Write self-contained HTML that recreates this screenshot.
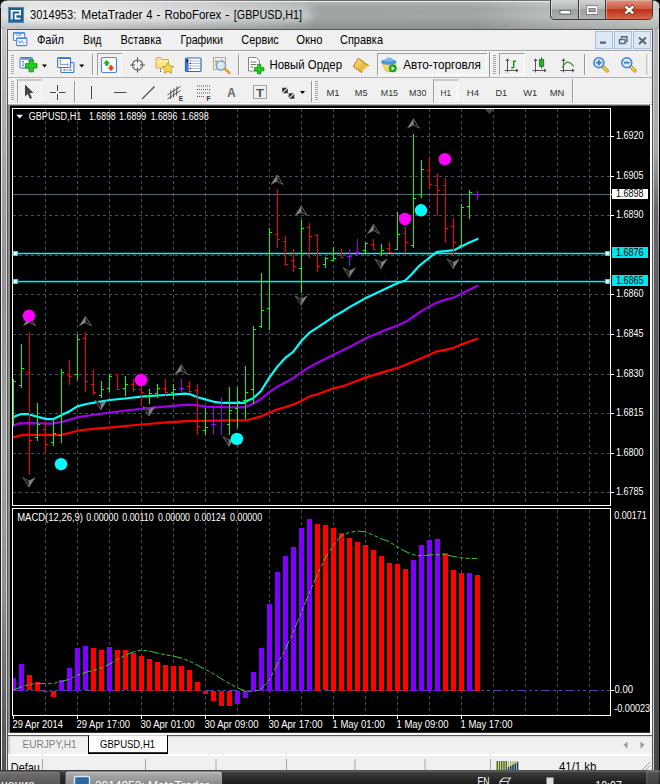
<!DOCTYPE html>
<html lang="ru"><head><meta charset="utf-8"><title>3014953: MetaTrader 4 - RoboForex - [GBPUSD,H1]</title>
<style>
html,body{margin:0;padding:0;background:#000;overflow:hidden}
body{width:660px;height:784px}
svg{display:block;font-family:"Liberation Sans",Arial,sans-serif}
text{white-space:pre}
</style></head><body>
<svg width="660" height="784" viewBox="0 0 660 784">
<defs>
<linearGradient id="tb" x1="0" y1="0" x2="1" y2="0"><stop offset="0" stop-color="#e0e2e2"/><stop offset="0.15" stop-color="#d2d5d5"/><stop offset="0.3" stop-color="#bec2c2"/><stop offset="0.47" stop-color="#a2a8a8"/><stop offset="0.72" stop-color="#a2a9a9"/><stop offset="0.84" stop-color="#bcc0c0"/><stop offset="1" stop-color="#cfd1d1"/></linearGradient>
<linearGradient id="fl" x1="0" y1="0" x2="0" y2="1"><stop offset="0" stop-color="#c8c8c8"/><stop offset="0.095" stop-color="#b0b0b0"/><stop offset="0.23" stop-color="#9e9e9e"/><stop offset="0.36" stop-color="#909090"/><stop offset="0.56" stop-color="#a2a2a2"/><stop offset="0.757" stop-color="#8c8c8c"/><stop offset="0.89" stop-color="#626062"/><stop offset="1" stop-color="#525052"/></linearGradient>
<linearGradient id="fr" x1="0" y1="0" x2="0" y2="1"><stop offset="0" stop-color="#b8bcc0"/><stop offset="0.16" stop-color="#a4a8ac"/><stop offset="0.24" stop-color="#6c646c"/><stop offset="0.4" stop-color="#5c5860"/><stop offset="0.7" stop-color="#545256"/><stop offset="1" stop-color="#48444a"/></linearGradient>
<linearGradient id="bmin" x1="0" y1="0" x2="0" y2="1"><stop offset="0" stop-color="#d0d3d3"/><stop offset="0.45" stop-color="#b4b8b8"/><stop offset="0.5" stop-color="#9a9e9e"/><stop offset="1" stop-color="#b0b4b4"/></linearGradient>
<linearGradient id="bcl" x1="0" y1="0" x2="0" y2="1"><stop offset="0" stop-color="#e0907c"/><stop offset="0.45" stop-color="#cf5a42"/><stop offset="0.5" stop-color="#bf2f18"/><stop offset="1" stop-color="#d6684a"/></linearGradient>
<linearGradient id="tsk" x1="0" y1="0" x2="0" y2="1"><stop offset="0" stop-color="#8c8c8c"/><stop offset="1" stop-color="#6a6a6a"/></linearGradient>
<linearGradient id="tsk2" x1="0" y1="0" x2="0" y2="1"><stop offset="0" stop-color="#d8d8d8"/><stop offset="1" stop-color="#b0b0b0"/></linearGradient>
<filter id="glow" x="-10%" y="-60%" width="120%" height="220%"><feGaussianBlur stdDeviation="4"/></filter>
<pattern id="chk" width="2" height="2" patternUnits="userSpaceOnUse"><rect width="2" height="2" fill="#ffffff"/><rect width="1" height="1" fill="#e6e6e6"/><rect x="1" y="1" width="1" height="1" fill="#e6e6e6"/></pattern>
</defs>
<rect x="0" y="0" width="660" height="784" fill="#000" />
<path d="M0,784 V8 Q0,0 8,0 H652 Q660,0 660,8 V784 Z" fill="url(#tb)" stroke="#2a2a2a" stroke-width="1"/>
<rect x="1" y="28" width="1" height="756" fill="#eeeeee" />
<rect x="2" y="28" width="4" height="756" fill="url(#fl)" />
<rect x="6" y="28" width="1" height="756" fill="#d8d8d8" />
<rect x="653" y="28" width="1" height="756" fill="#d0d4d8" />
<rect x="654" y="28" width="4" height="756" fill="url(#fr)" />
<linearGradient id="fe" x1="0" y1="0" x2="0" y2="1"><stop offset="0" stop-color="#ececec"/><stop offset="0.2" stop-color="#d8d8d8"/><stop offset="0.3" stop-color="#8a868a"/><stop offset="1" stop-color="#4a464a"/></linearGradient>
<rect x="658" y="28" width="1" height="756" fill="url(#fe)" />
<rect x="659" y="8" width="1" height="776" fill="#000" />
<rect x="0" y="8" width="1" height="776" fill="#1a1a1a" />
<linearGradient id="tv" x1="0" y1="0" x2="0" y2="1"><stop offset="0" stop-color="#fff" stop-opacity="0.15"/><stop offset="0.5" stop-color="#000" stop-opacity="0"/><stop offset="1" stop-color="#000" stop-opacity="0.14"/></linearGradient>
<rect x="1" y="2" width="658" height="27" fill="url(#tv)" />
<rect x="8" y="1" width="644" height="1" fill="#eef0f0" />
<linearGradient id="gl" x1="0" y1="0" x2="1" y2="0"><stop offset="0" stop-color="#fff" stop-opacity="0.6"/><stop offset="0.5" stop-color="#fff" stop-opacity="0.5"/><stop offset="1" stop-color="#fff" stop-opacity="0.35"/></linearGradient>
<rect x="22" y="5" width="290" height="18" rx="8" fill="url(#gl)" filter="url(#glow)"/>
<text x="30" y="18.8" font-size="12.3" fill="#000" textLength="46.3" lengthAdjust="spacingAndGlyphs" >3014953:</text>
<text x="81.3" y="18.8" font-size="12.3" fill="#000" textLength="61.2" lengthAdjust="spacingAndGlyphs" >MetaTrader</text>
<text x="146.3" y="18.8" font-size="12.3" fill="#000" textLength="6.2" lengthAdjust="spacingAndGlyphs" >4</text>
<text x="156.3" y="18.8" font-size="12.3" fill="#000" textLength="4.2" lengthAdjust="spacingAndGlyphs" >-</text>
<text x="164.5" y="18.8" font-size="12.3" fill="#000" textLength="56.8" lengthAdjust="spacingAndGlyphs" >RoboForex</text>
<text x="225" y="18.8" font-size="12.3" fill="#000" textLength="4.5" lengthAdjust="spacingAndGlyphs" >-</text>
<text x="233.8" y="18.8" font-size="12.3" fill="#000" textLength="68.2" lengthAdjust="spacingAndGlyphs" >[GBPUSD,H1]</text>
<rect x="8" y="7" width="16" height="15.7" rx="1" fill="#1d5d8c"/><rect x="8.5" y="7.5" width="15" height="14.7" rx="1" fill="none" stroke="#4f8fc0" stroke-width="1"/>
<path d="M10.7,10 H21 V15.3 H16.4 V17.7 H20.5 V19.5 H14.5 V13.6 H19.3 V11.6 H12.7 V19.5 H10.7 Z" fill="#fff"/>
<path d="M550.5,0 V15 Q550.5,19.5 555,19.5 H648 Q652.5,19.5 652.5,15 V0" fill="url(#bmin)" stroke="#3c3c3c" stroke-width="1"/>
<path d="M606,0.5 H652 V15 Q652,19 648,19 H606 Z" fill="url(#bcl)"/>
<line x1="578.5" y1="0" x2="578.5" y2="19" stroke="#3c3c3c" stroke-width="1" />
<line x1="605.5" y1="0" x2="605.5" y2="19" stroke="#3c3c3c" stroke-width="1" />
<line x1="579.5" y1="1" x2="579.5" y2="18.5" stroke="#e0e2e2" stroke-width="1" opacity="0.7"/>
<line x1="551.5" y1="1" x2="551.5" y2="16" stroke="#e0e2e2" stroke-width="1" opacity="0.7"/>
<line x1="606.5" y1="1" x2="606.5" y2="18.5" stroke="#f0b0a0" stroke-width="1" opacity="0.7"/>
<rect x="560" y="10.5" width="10.5" height="3.5" fill="#fff" stroke="#555" stroke-width="0.8"/>
<rect x="586.6" y="5.9" width="11" height="8.3" fill="none" stroke="#555" stroke-width="0.8"/><rect x="587.7" y="7" width="8.8" height="6.1" fill="none" stroke="#fff" stroke-width="1.9"/><rect x="589" y="8.3" width="6.2" height="3.5" fill="none" stroke="#666" stroke-width="0.6"/>
<path d="M626.2,7.2 L632.4,12.6 M632.4,7.2 L626.2,12.6" stroke="#5a3028" stroke-width="3.8" stroke-linecap="square"/><path d="M626.2,7.2 L632.4,12.6 M632.4,7.2 L626.2,12.6" stroke="#fff" stroke-width="2.5" stroke-linecap="square"/>
<rect x="7" y="29" width="646" height="741" fill="#555" />
<rect x="8" y="30" width="644" height="740" fill="#fff" />
<rect x="8" y="30" width="644" height="20" fill="#f0f0f0" />
<rect x="8" y="50" width="644" height="1" fill="#a0a0a0" />
<rect x="8" y="51" width="644" height="26" fill="#f0f0f0" />
<rect x="8" y="51" width="644" height="1" fill="#fafafa" />
<rect x="8" y="77" width="644" height="1" fill="#b4b4b4" />
<rect x="8" y="78" width="644" height="25" fill="#f0f0f0" />
<linearGradient id="sh" x1="0" y1="0" x2="0" y2="1"><stop offset="0" stop-color="#d0d0d0"/><stop offset="1" stop-color="#505050"/></linearGradient>
<rect x="8" y="102.5" width="644" height="2.5" fill="url(#sh)" />
<g>
<text x="37" y="43.7" font-size="12.2" fill="#000" textLength="27" lengthAdjust="spacingAndGlyphs" >Файл</text>
<text x="83.3" y="43.7" font-size="12.2" fill="#000" textLength="18.2" lengthAdjust="spacingAndGlyphs" >Вид</text>
<text x="120.5" y="43.7" font-size="12.2" fill="#000" textLength="40.8" lengthAdjust="spacingAndGlyphs" >Вставка</text>
<text x="180.5" y="43.7" font-size="12.2" fill="#000" textLength="42.5" lengthAdjust="spacingAndGlyphs" >Графики</text>
<text x="241.3" y="43.7" font-size="12.2" fill="#000" textLength="37.5" lengthAdjust="spacingAndGlyphs" >Сервис</text>
<text x="296.3" y="43.7" font-size="12.2" fill="#000" textLength="26.2" lengthAdjust="spacingAndGlyphs" >Окно</text>
<text x="340" y="43.7" font-size="12.2" fill="#000" textLength="43" lengthAdjust="spacingAndGlyphs" >Справка</text>
</g>
<g fill="#fff" stroke="#4a84ee" stroke-width="1.1"><rect x="13.5" y="32.7" width="11.2" height="7.8" rx="0.8"/><path d="M16,35.5 l1.2,-1 l1.3,1.6 l1.5,-2 l1.6,1.8" fill="none" stroke-width="0.8"/><rect x="16.6" y="38" width="10.2" height="7.6" rx="0.8"/></g>
<path d="M13.5,33 h11.2 M16.6,38.3 h10.2" stroke="#4a84ee" stroke-width="1.4"/>
<path d="M18.5,40.5 l1.5,2.8 l1.7,-2.8 l1.6,2.8 l1.3,-1" fill="none" stroke="#4a84ee" stroke-width="0.9"/>
<rect x="595.5" y="31.5" width="17" height="17" fill="#dce8f6" stroke="#a9c1de" stroke-width="1"/>
<rect x="614.5" y="31.5" width="17" height="17" fill="#dce8f6" stroke="#a9c1de" stroke-width="1"/>
<rect x="633.5" y="31.5" width="17" height="17" fill="#dce8f6" stroke="#a9c1de" stroke-width="1"/>
<rect x="600" y="41.5" width="6" height="2.3" fill="#5c6670" />
<g fill="none" stroke="#5c6670" stroke-width="1.4"><path d="M621.5,38.5 V36.8 H627 V41.5 H625.5"/><rect x="619.5" y="39.5" width="5.5" height="4"/></g>
<path d="M639,37.5 L646,44 M646,37.5 L639,44" stroke="#5c6670" stroke-width="2"/>
<rect x="11" y="55" width="3" height="1" fill="#a8a8a8" />
<rect x="11" y="57" width="3" height="1" fill="#a8a8a8" />
<rect x="11" y="59" width="3" height="1" fill="#a8a8a8" />
<rect x="11" y="61" width="3" height="1" fill="#a8a8a8" />
<rect x="11" y="63" width="3" height="1" fill="#a8a8a8" />
<rect x="11" y="65" width="3" height="1" fill="#a8a8a8" />
<rect x="11" y="67" width="3" height="1" fill="#a8a8a8" />
<rect x="11" y="69" width="3" height="1" fill="#a8a8a8" />
<rect x="11" y="71" width="3" height="1" fill="#a8a8a8" />
<rect x="11" y="73" width="3" height="1" fill="#a8a8a8" />
<rect x="20" y="57.5" width="12.5" height="10.5" rx="1" fill="#fff" stroke="#3a78c8"/><rect x="20.5" y="58" width="11.5" height="2" fill="#6fa0dc"/>
<path d="M23,61 v5 M22,62 l1,-1 l1,1 M22,65 l1,1 l1,-1" stroke="#567" stroke-width="0.7" fill="none"/>
<path d="M29,60 h4.4 v3.6 h3.6 v4.4 h-3.6 v3.8 h-4.4 v-3.8 h-3.6 v-4.4 h3.6 Z" fill="#22cc22" stroke="#0a8a0a" stroke-width="0.8"/>
<path d="M42,64.5 h5 l-2.5,3 Z" fill="#000"/>
<rect x="60.9" y="62.5" width="13" height="10" rx="1" fill="#fafcff" stroke="#3a78c8" stroke-width="1.1"/>
<path d="M63.500,70 h8 M63.500,70 l1.500,-1.300 M63.500,70 l1.500,1.300 M71.500,70 l-1.500,-1.300 M71.500,70 l-1.500,1.300" stroke="#6c8cb0" stroke-width="0.8" fill="none"/>
<rect x="57.600" y="57.700" width="13" height="9.800" rx="1" fill="#fafcff" stroke="#3a78c8" stroke-width="1.1"/><path d="M57.600,58.200 h13" stroke="#3a78c8" stroke-width="1.600"/>
<path d="M60.300,60 v5.500 M59.200,61.200 l1.100,-1.200 l1.100,1.200 M60.300,64.500 h8 M66.800,63.300 l1.500,1.200 l-1.500,1.200" stroke="#6c8cb0" stroke-width="0.8" fill="none"/>
<path d="M79.2,64.5 h5 l-2.5,3 Z" fill="#000"/>
<rect x="92" y="54" width="1" height="21" fill="#989898" />
<rect x="93" y="54" width="1" height="21" fill="#fff" />
<rect x="97" y="53" width="25" height="22.5" fill="url(#chk)" shape-rendering="crispEdges"/>
<line x1="121.5" y1="53" x2="121.5" y2="75.5" stroke="#fff" stroke-width="1" />
<line x1="97" y1="75.0" x2="122" y2="75.0" stroke="#fff" stroke-width="1" />
<line x1="97.5" y1="53" x2="97.5" y2="75.5" stroke="#a0a0a0" stroke-width="1" />
<line x1="97" y1="53.5" x2="122" y2="53.5" stroke="#a0a0a0" stroke-width="1" />
<rect x="101.5" y="57.5" width="15" height="15" rx="1.5" fill="#fff" stroke="#4a8ad8" stroke-width="1.2"/>
<path d="M106.7,60 l3.5,3.5 h-2 v2.3 h-3 v-2.3 h-2 Z" fill="#18b018"/><path d="M111,71 l3.5,-3.5 h-2 v-2.3 h-3 v2.3 h-2 Z" fill="#e8401c"/>
<g fill="none" stroke="#5a5a5a" stroke-width="1.1"><circle cx="137.5" cy="65" r="5"/><path d="M137.5,57.5 v5 M137.5,67.5 v5 M130,65 h5 M140,65 h5"/></g>
<path d="M156,58.500 q0,-1 1,-1 h3.500 l1.500,2 h6.500 v8.500 h-12.500 Z" fill="#f8e690" stroke="#c8a030" stroke-width="0.800"/><path d="M156.500,61.500 h11.500" stroke="#fff8d0" stroke-width="1"/><path d="M168,62.5 l1.8,3.6 l4,0.5 l-3,2.7 l0.8,4 l-3.6,-2 l-3.6,2 l0.8,-4 l-3,-2.7 l4,-0.5 Z" fill="#f8d84a" stroke="#b8901c" stroke-width="0.8"/>
<path d="M160.5,69 v4" stroke="#444" stroke-width="1" stroke-dasharray="1 1"/>
<rect x="185.5" y="58" width="15.5" height="13.5" rx="1" fill="#fff" stroke="#2a68c0" stroke-width="1.2"/><rect x="186" y="58.500" width="2.600" height="12.500" fill="#3a78d0"/><path d="M191,61 h9 M191,63.5 h9 M191,66 h9 M191,68.5 h9" stroke="#8aa8d8" stroke-width="0.8"/><path d="M189.600,61 h1.400 M189.600,66 h1.400" stroke="#e03030" stroke-width="1.200"/><path d="M189.600,63.500 h1.400 M189.600,68.500 h1.400" stroke="#223" stroke-width="1.200"/><path d="M187.300,59.500 v3" stroke="#112" stroke-width="1.200"/>
<rect x="213.5" y="57.5" width="12" height="12" fill="#f4f0e0" stroke="#a09880" stroke-width="0.8"/><path d="M216,59.500 v7 M222.500,59.500 v5 M215,61.500 h9" stroke="#8a8678" stroke-width="0.700" fill="none"/><circle cx="221" cy="65.500" r="4.600" fill="#d2e6f6" fill-opacity="0.850" stroke="#6a9acc" stroke-width="1.300"/><path d="M224.5,68.5 l5,4.5" stroke="#d8a030" stroke-width="2.4" stroke-linecap="round"/>
<rect x="238" y="54" width="1" height="21" fill="#989898" />
<rect x="239" y="54" width="1" height="21" fill="#fff" />
<path d="M248.5,57.5 h7.5 l3.5,3.5 v10 h-11 Z" fill="#fff" stroke="#777" stroke-width="0.9"/><path d="M250.5,62 h6 M250.5,64.5 h6 M250.5,67 h3" stroke="#666" stroke-width="0.9"/>
<path d="M257.5,64.5 h3.4 v3 h3 v3.4 h-3 v3 h-3.4 v-3 h-3 v-3.4 h3 Z" fill="#22cc22" stroke="#0a8a0a" stroke-width="0.7"/>
<text x="269.5" y="69" font-size="12" fill="#000" textLength="72.5" lengthAdjust="spacingAndGlyphs" >Новый Ордер</text>
<linearGradient id="bk" x1="0" y1="0" x2="1" y2="1"><stop offset="0" stop-color="#fbe878"/><stop offset="1" stop-color="#dc9c18"/></linearGradient>
<path d="M358.3,58.2 L368.7,65.6 L361.5,72.5 L353.3,66.5 Z" fill="url(#bk)" stroke="#a26c12" stroke-width="0.9" stroke-linejoin="round"/><path d="M362.2,71.3 L368,65.8" fill="none" stroke="#fff4d0" stroke-width="1.1"/>
<rect x="377" y="53" width="110" height="22.5" fill="url(#chk)" shape-rendering="crispEdges"/>
<line x1="486.5" y1="53" x2="486.5" y2="75.5" stroke="#fff" stroke-width="1" />
<line x1="377" y1="75.0" x2="487" y2="75.0" stroke="#fff" stroke-width="1" />
<line x1="377.5" y1="53" x2="377.5" y2="75.5" stroke="#a0a0a0" stroke-width="1" />
<line x1="377" y1="53.5" x2="487" y2="53.5" stroke="#a0a0a0" stroke-width="1" />
<path d="M382,63 Q389,66.500 396,63 L392.500,70.500 Q389,73.500 385.500,70.500 Z" fill="#f4d860" stroke="#c8a030" stroke-width="0.6"/><ellipse cx="388.800" cy="62" rx="7.800" ry="2.800" fill="#4a94d8"/><path d="M384.500,61.500 q0.500,-4 4.500,-4 q4,0 4.500,4 Z" fill="#78b8ee"/><circle cx="392.800" cy="68.400" r="3.700" fill="#18b018" stroke="#0a800a" stroke-width="0.5"/><path d="M391.600,66.300 l3.200,2.100 l-3.200,2.100 Z" fill="#fff"/>
<text x="403.2" y="69" font-size="12" fill="#000" textLength="77.6" lengthAdjust="spacingAndGlyphs" >Авто-торговля</text>
<rect x="489" y="52" width="1" height="25" fill="#989898" />
<rect x="490" y="52" width="1" height="25" fill="#fff" />
<rect x="493" y="55" width="3" height="1" fill="#a8a8a8" />
<rect x="493" y="57" width="3" height="1" fill="#a8a8a8" />
<rect x="493" y="59" width="3" height="1" fill="#a8a8a8" />
<rect x="493" y="61" width="3" height="1" fill="#a8a8a8" />
<rect x="493" y="63" width="3" height="1" fill="#a8a8a8" />
<rect x="493" y="65" width="3" height="1" fill="#a8a8a8" />
<rect x="493" y="67" width="3" height="1" fill="#a8a8a8" />
<rect x="493" y="69" width="3" height="1" fill="#a8a8a8" />
<rect x="493" y="71" width="3" height="1" fill="#a8a8a8" />
<rect x="493" y="73" width="3" height="1" fill="#a8a8a8" />
<rect x="499" y="53" width="25.5" height="22.5" fill="url(#chk)" shape-rendering="crispEdges"/>
<line x1="524.0" y1="53" x2="524.0" y2="75.5" stroke="#fff" stroke-width="1" />
<line x1="499" y1="75.0" x2="524.5" y2="75.0" stroke="#fff" stroke-width="1" />
<line x1="499.5" y1="53" x2="499.5" y2="75.5" stroke="#a0a0a0" stroke-width="1" />
<line x1="499" y1="53.5" x2="524.5" y2="53.5" stroke="#a0a0a0" stroke-width="1" />
<path d="M507.5,59.5 V72.5 M504.5,70.5 H517.5" stroke="#555" stroke-width="1" fill="none"/><path d="M505.5,61 L507.5,58.3 L509.5,61 Z M516,68.5 L518.7,70.5 L516,72.5 Z" fill="#555"/>
<path d="M513.7,60.5 V68 M513.7,61.3 h2.3 M511.200,67.700 h2.500" stroke="#1f8a1f" stroke-width="1.5" fill="none"/>
<path d="M535.5,59.5 V72.5 M532.5,70.5 H545.5" stroke="#555" stroke-width="1" fill="none"/><path d="M533.5,61 L535.5,58.3 L537.5,61 Z M544,68.5 L546.7,70.5 L544,72.5 Z" fill="#555"/>
<path d="M541.600,57.200 V68.400" stroke="#1a6a1a" stroke-width="1"/><rect x="539.400" y="59.500" width="4.400" height="6.800" fill="#22b422" stroke="#0f700f" stroke-width="0.7"/>
<path d="M563.5,59.5 V72.5 M560.5,70.5 H573.5" stroke="#555" stroke-width="1" fill="none"/><path d="M561.5,61 L563.5,58.3 L565.5,61 Z M572,68.5 L574.7,70.5 L572,72.5 Z" fill="#555"/>
<path d="M562.200,67.500 Q565.500,61.800 568.300,62.200 Q571,62.800 573.800,66.300" stroke="#2a922a" stroke-width="1.2" fill="none"/>
<rect x="584" y="54" width="1" height="21" fill="#989898" />
<rect x="585" y="54" width="1" height="21" fill="#fff" />
<path d="M602.5,66.4 l4.6,4.3" stroke="#a88418" stroke-width="3.6" stroke-linecap="round"/><path d="M602.5,66.4 l4.6,4.3" stroke="#ecd048" stroke-width="2.2" stroke-linecap="round"/>
<circle cx="598.9" cy="62.7" r="5" fill="#d4eaf8" stroke="#3e84d0" stroke-width="1.5"/>
<path d="M596.1,62.7 h5.6" stroke="#3c78b4" stroke-width="1.7"/>
<path d="M598.9,59.9 v5.6" stroke="#3c78b4" stroke-width="1.7"/>
<path d="M630.4,66.4 l4.6,4.3" stroke="#a88418" stroke-width="3.6" stroke-linecap="round"/><path d="M630.4,66.4 l4.6,4.3" stroke="#ecd048" stroke-width="2.2" stroke-linecap="round"/>
<circle cx="626.8" cy="62.7" r="5" fill="#d4eaf8" stroke="#3e84d0" stroke-width="1.5"/>
<path d="M624.0,62.7 h5.6" stroke="#3c78b4" stroke-width="1.7"/>
<rect x="646.5" y="54" width="1" height="21" fill="#989898" />
<rect x="647.5" y="54" width="1" height="21" fill="#fff" />
<rect x="11" y="81" width="3" height="1" fill="#a8a8a8" />
<rect x="11" y="83" width="3" height="1" fill="#a8a8a8" />
<rect x="11" y="85" width="3" height="1" fill="#a8a8a8" />
<rect x="11" y="87" width="3" height="1" fill="#a8a8a8" />
<rect x="11" y="89" width="3" height="1" fill="#a8a8a8" />
<rect x="11" y="91" width="3" height="1" fill="#a8a8a8" />
<rect x="11" y="93" width="3" height="1" fill="#a8a8a8" />
<rect x="11" y="95" width="3" height="1" fill="#a8a8a8" />
<rect x="11" y="97" width="3" height="1" fill="#a8a8a8" />
<rect x="11" y="99" width="3" height="1" fill="#a8a8a8" />
<rect x="17" y="79.5" width="25" height="22.5" fill="url(#chk)" shape-rendering="crispEdges"/>
<line x1="41.5" y1="79.5" x2="41.5" y2="102" stroke="#fff" stroke-width="1" />
<line x1="17" y1="101.5" x2="42" y2="101.5" stroke="#fff" stroke-width="1" />
<line x1="17.5" y1="79.5" x2="17.5" y2="102" stroke="#a0a0a0" stroke-width="1" />
<line x1="17" y1="80.0" x2="42" y2="80.0" stroke="#a0a0a0" stroke-width="1" />
<path d="M25,84.5 v12 l2.8,-2.6 l2.2,5 l2,-0.9 l-2.2,-4.9 h3.8 Z" fill="#444"/>
<path d="M50,92.5 h6 M59,92.5 h6.5 M57.5,85 v6 M57.5,94 v6" stroke="#444" stroke-width="1"/>
<rect x="74" y="81" width="1" height="21" fill="#989898" />
<rect x="75" y="81" width="1" height="21" fill="#fff" />
<rect x="91" y="86" width="1" height="13" fill="#4a4a4a" />
<rect x="114" y="92" width="12.5" height="1" fill="#4a4a4a" />
<path d="M142,99 L154.5,86.5" stroke="#4a4a4a" stroke-width="1.1"/>
<path d="M167.5,95 l13,-8.5 M167.5,99 l13,-8.5 M171,90 l-0.5,9 M174,88.5 l-0.5,9 M177,86.5 l-0.5,9" stroke="#444" stroke-width="0.9" fill="none"/>
<text x="178.8" y="100.7" font-size="6.6" fill="#333" font-weight="bold">E</text>
<path d="M197,86 h13 M197,89.5 h13 M197,93 h13 M197,96.5 h8" stroke="#555" stroke-width="1" stroke-dasharray="1 1"/>
<text x="206.6" y="100.7" font-size="6.6" fill="#333" font-weight="bold">F</text>
<text x="227.2" y="96.6" font-size="12.2" fill="#666" textLength="8.4" lengthAdjust="spacingAndGlyphs" font-weight="bold">A</text>
<rect x="253.5" y="85.5" width="13" height="13" fill="none" stroke="#555" stroke-width="1" stroke-dasharray="1 1"/>
<text x="256" y="96.6" font-size="11.5" fill="#555" textLength="8" lengthAdjust="spacingAndGlyphs" font-weight="bold">T</text>
<path d="M285,86.5 l3.5,3.5 h-7 Z M285,94.5 l-3.5,-3.5 h7 Z" fill="#333" transform="rotate(-45 285 90.5)"/><path d="M291.5,92 l3.5,3.5 h-7 Z M291.5,100 l-3.5,-3.5 h7 Z" fill="#333" transform="rotate(-45 291.5 96)"/>
<path d="M300,91 h5 l-2.5,3 Z" fill="#000"/>
<rect x="311" y="81" width="1" height="21" fill="#989898" />
<rect x="312" y="81" width="1" height="21" fill="#fff" />
<rect x="315" y="81" width="3" height="1" fill="#a8a8a8" />
<rect x="315" y="83" width="3" height="1" fill="#a8a8a8" />
<rect x="315" y="85" width="3" height="1" fill="#a8a8a8" />
<rect x="315" y="87" width="3" height="1" fill="#a8a8a8" />
<rect x="315" y="89" width="3" height="1" fill="#a8a8a8" />
<rect x="315" y="91" width="3" height="1" fill="#a8a8a8" />
<rect x="315" y="93" width="3" height="1" fill="#a8a8a8" />
<rect x="315" y="95" width="3" height="1" fill="#a8a8a8" />
<rect x="315" y="97" width="3" height="1" fill="#a8a8a8" />
<rect x="315" y="99" width="3" height="1" fill="#a8a8a8" />
<text x="326.5" y="95.9" font-size="9.6" fill="#333" textLength="13.1" lengthAdjust="spacingAndGlyphs" >M1</text>
<text x="354.8" y="95.9" font-size="9.6" fill="#333" textLength="12.7" lengthAdjust="spacingAndGlyphs" >M5</text>
<text x="380.8" y="95.9" font-size="9.6" fill="#333" textLength="17.2" lengthAdjust="spacingAndGlyphs" >M15</text>
<text x="409" y="95.9" font-size="9.6" fill="#333" textLength="17.4" lengthAdjust="spacingAndGlyphs" >M30</text>
<rect x="433" y="79.5" width="25.5" height="22.5" fill="url(#chk)" shape-rendering="crispEdges"/>
<line x1="458.0" y1="79.5" x2="458.0" y2="102" stroke="#fff" stroke-width="1" />
<line x1="433" y1="101.5" x2="458.5" y2="101.5" stroke="#fff" stroke-width="1" />
<line x1="433.5" y1="79.5" x2="433.5" y2="102" stroke="#a0a0a0" stroke-width="1" />
<line x1="433" y1="80.0" x2="458.5" y2="80.0" stroke="#a0a0a0" stroke-width="1" />
<text x="440.4" y="95.9" font-size="9.6" fill="#333" textLength="10.6" lengthAdjust="spacingAndGlyphs" >H1</text>
<text x="466.8" y="95.9" font-size="9.6" fill="#333" textLength="12.4" lengthAdjust="spacingAndGlyphs" >H4</text>
<text x="495.4" y="95.9" font-size="9.6" fill="#333" textLength="11.8" lengthAdjust="spacingAndGlyphs" >D1</text>
<text x="523.3" y="95.9" font-size="9.6" fill="#333" textLength="14.0" lengthAdjust="spacingAndGlyphs" >W1</text>
<text x="549.7" y="95.9" font-size="9.6" fill="#333" textLength="14.6" lengthAdjust="spacingAndGlyphs" >MN</text>
<rect x="572" y="79" width="1" height="23" fill="#989898" />
<rect x="573" y="79" width="1" height="23" fill="#fff" />
<rect x="8" y="103" width="644" height="2" fill="#fff" />
<rect x="8" y="104.5" width="644" height="1.5" fill="#6a6a6a" />
<rect x="8" y="105" width="2" height="629" fill="#8c8c8c" />
<rect x="650" y="105" width="2" height="629" fill="#fff" />
<rect x="10" y="105.8" width="640" height="627.7" fill="#000" />
<g shape-rendering="crispEdges">
<line x1="45.5" y1="109" x2="45.5" y2="505" stroke="#45515c" stroke-width="1" stroke-dasharray="3 3"/>
<line x1="45.5" y1="510" x2="45.5" y2="715" stroke="#45515c" stroke-width="1" stroke-dasharray="3 3"/>
<line x1="77.5" y1="109" x2="77.5" y2="505" stroke="#45515c" stroke-width="1" stroke-dasharray="3 3"/>
<line x1="77.5" y1="510" x2="77.5" y2="715" stroke="#45515c" stroke-width="1" stroke-dasharray="3 3"/>
<line x1="109.5" y1="109" x2="109.5" y2="505" stroke="#45515c" stroke-width="1" stroke-dasharray="3 3"/>
<line x1="109.5" y1="510" x2="109.5" y2="715" stroke="#45515c" stroke-width="1" stroke-dasharray="3 3"/>
<line x1="141.5" y1="109" x2="141.5" y2="505" stroke="#45515c" stroke-width="1" stroke-dasharray="3 3"/>
<line x1="141.5" y1="510" x2="141.5" y2="715" stroke="#45515c" stroke-width="1" stroke-dasharray="3 3"/>
<line x1="173.5" y1="109" x2="173.5" y2="505" stroke="#45515c" stroke-width="1" stroke-dasharray="3 3"/>
<line x1="173.5" y1="510" x2="173.5" y2="715" stroke="#45515c" stroke-width="1" stroke-dasharray="3 3"/>
<line x1="205.5" y1="109" x2="205.5" y2="505" stroke="#45515c" stroke-width="1" stroke-dasharray="3 3"/>
<line x1="205.5" y1="510" x2="205.5" y2="715" stroke="#45515c" stroke-width="1" stroke-dasharray="3 3"/>
<line x1="237.5" y1="109" x2="237.5" y2="505" stroke="#45515c" stroke-width="1" stroke-dasharray="3 3"/>
<line x1="237.5" y1="510" x2="237.5" y2="715" stroke="#45515c" stroke-width="1" stroke-dasharray="3 3"/>
<line x1="269.5" y1="109" x2="269.5" y2="505" stroke="#45515c" stroke-width="1" stroke-dasharray="3 3"/>
<line x1="269.5" y1="510" x2="269.5" y2="715" stroke="#45515c" stroke-width="1" stroke-dasharray="3 3"/>
<line x1="301.5" y1="109" x2="301.5" y2="505" stroke="#45515c" stroke-width="1" stroke-dasharray="3 3"/>
<line x1="301.5" y1="510" x2="301.5" y2="715" stroke="#45515c" stroke-width="1" stroke-dasharray="3 3"/>
<line x1="333.5" y1="109" x2="333.5" y2="505" stroke="#45515c" stroke-width="1" stroke-dasharray="3 3"/>
<line x1="333.5" y1="510" x2="333.5" y2="715" stroke="#45515c" stroke-width="1" stroke-dasharray="3 3"/>
<line x1="365.5" y1="109" x2="365.5" y2="505" stroke="#45515c" stroke-width="1" stroke-dasharray="3 3"/>
<line x1="365.5" y1="510" x2="365.5" y2="715" stroke="#45515c" stroke-width="1" stroke-dasharray="3 3"/>
<line x1="397.5" y1="109" x2="397.5" y2="505" stroke="#45515c" stroke-width="1" stroke-dasharray="3 3"/>
<line x1="397.5" y1="510" x2="397.5" y2="715" stroke="#45515c" stroke-width="1" stroke-dasharray="3 3"/>
<line x1="429.5" y1="109" x2="429.5" y2="505" stroke="#45515c" stroke-width="1" stroke-dasharray="3 3"/>
<line x1="429.5" y1="510" x2="429.5" y2="715" stroke="#45515c" stroke-width="1" stroke-dasharray="3 3"/>
<line x1="461.5" y1="109" x2="461.5" y2="505" stroke="#45515c" stroke-width="1" stroke-dasharray="3 3"/>
<line x1="461.5" y1="510" x2="461.5" y2="715" stroke="#45515c" stroke-width="1" stroke-dasharray="3 3"/>
<line x1="493.5" y1="109" x2="493.5" y2="505" stroke="#45515c" stroke-width="1" stroke-dasharray="3 3"/>
<line x1="493.5" y1="510" x2="493.5" y2="715" stroke="#45515c" stroke-width="1" stroke-dasharray="3 3"/>
<line x1="525.5" y1="109" x2="525.5" y2="505" stroke="#45515c" stroke-width="1" stroke-dasharray="3 3"/>
<line x1="525.5" y1="510" x2="525.5" y2="715" stroke="#45515c" stroke-width="1" stroke-dasharray="3 3"/>
<line x1="557.5" y1="109" x2="557.5" y2="505" stroke="#45515c" stroke-width="1" stroke-dasharray="3 3"/>
<line x1="557.5" y1="510" x2="557.5" y2="715" stroke="#45515c" stroke-width="1" stroke-dasharray="3 3"/>
<line x1="589.5" y1="109" x2="589.5" y2="505" stroke="#45515c" stroke-width="1" stroke-dasharray="3 3"/>
<line x1="589.5" y1="510" x2="589.5" y2="715" stroke="#45515c" stroke-width="1" stroke-dasharray="3 3"/>
<line x1="13" y1="136.5" x2="610" y2="136.5" stroke="#45515c" stroke-width="1" stroke-dasharray="3 3"/>
<line x1="13" y1="176.5" x2="610" y2="176.5" stroke="#45515c" stroke-width="1" stroke-dasharray="3 3"/>
<line x1="13" y1="215.5" x2="610" y2="215.5" stroke="#45515c" stroke-width="1" stroke-dasharray="3 3"/>
<line x1="13" y1="255.5" x2="610" y2="255.5" stroke="#45515c" stroke-width="1" stroke-dasharray="3 3"/>
<line x1="13" y1="294.5" x2="610" y2="294.5" stroke="#45515c" stroke-width="1" stroke-dasharray="3 3"/>
<line x1="13" y1="334.5" x2="610" y2="334.5" stroke="#45515c" stroke-width="1" stroke-dasharray="3 3"/>
<line x1="13" y1="374.5" x2="610" y2="374.5" stroke="#45515c" stroke-width="1" stroke-dasharray="3 3"/>
<line x1="13" y1="413.5" x2="610" y2="413.5" stroke="#45515c" stroke-width="1" stroke-dasharray="3 3"/>
<line x1="13" y1="453.5" x2="610" y2="453.5" stroke="#45515c" stroke-width="1" stroke-dasharray="3 3"/>
<line x1="13" y1="492.5" x2="610" y2="492.5" stroke="#45515c" stroke-width="1" stroke-dasharray="3 3"/>
</g>
<g shape-rendering="crispEdges">
<line x1="13" y1="194.5" x2="610" y2="194.5" stroke="#586572" stroke-width="1" />
<line x1="13" y1="690.5" x2="610" y2="690.5" stroke="#5246a4" stroke-width="1" stroke-dasharray="9 3 3 3 3 3"/>
</g>
<g shape-rendering="crispEdges">
</g><g>
<rect x="13" y="252.75" width="597" height="1.5" fill="#00f4fa" />
<rect x="13" y="280.8" width="597" height="1.5" fill="#00f4fa" />
<rect x="13" y="251.0" width="5" height="5" fill="#00e8f0" />
<rect x="14" y="252.0" width="3" height="3" fill="#fff" />
<rect x="605" y="251.0" width="5" height="5" fill="#00e8f0" />
<rect x="606" y="252.0" width="3" height="3" fill="#fff" />
<rect x="13" y="279.0" width="5" height="5" fill="#00e8f0" />
<rect x="14" y="280.0" width="3" height="3" fill="#fff" />
<rect x="605" y="279.0" width="5" height="5" fill="#00e8f0" />
<rect x="606" y="280.0" width="3" height="3" fill="#fff" />
</g>
<clipPath id="cm"><rect x="13" y="109" width="597" height="396"/></clipPath><g clip-path="url(#cm)">
<polyline points="13.5,437.3 22.7,434.9 61,434.9 70,432.7 79,430.5 95.5,428.7 111.8,427.3 130,425.5 148,424 170,422.2 187.4,421.2 215,420.6 235,420.4 247.7,420 253.2,418.5 261,416.4 269,412.7 276.8,409.6 285,407.3 293.2,404.5 301.4,401 309.5,396.4 317.7,394.2 326,391 334,388.2 342.3,386.4 350,383.4 366,377.4 381.8,372.6 397.7,367.9 413.6,361.5 422,357.9 429.5,354.7 437,351.3 445.5,349.9 454,347.7 461.4,344.6 468.8,341.8 477.5,338.8" fill="none" stroke="#ff0000" stroke-width="2.2" stroke-linejoin="round" stroke-linecap="round" />
<polyline points="13.5,425.8 19,423.3 29.5,423.2 51.8,423.6 61,422.2 70,419.6 77.3,417.3 95.5,414.5 110,412.7 130,410 141,408.8 165,406.6 187.4,404.6 196,405.2 206,406.6 221,407.2 244,407.3 249.5,405.5 253.2,403.6 261,399 269,392.4 276.8,387 285,382.7 293.2,378.2 301.4,372.4 309.5,367 317.7,362.7 326,358.5 334,354.5 342.3,350.5 350,346.7 366,338.2 381.8,331.4 397.7,325.5 406.2,321.6 413.6,316.5 422,310.6 429.5,306.4 437,302.5 445.5,299.6 454,297.5 461.4,293.6 468.8,290 477.5,285.8" fill="none" stroke="#9d00e8" stroke-width="2.2" stroke-linejoin="round" stroke-linecap="round" />
<polyline points="13.5,417.2 17,415.5 21,414.2 28,414.2 37.4,416.8 46.4,419.1 53.6,419.1 62.7,414.5 70,411 77.3,406.4 86.4,404 97.3,402.2 110,400 125,398.5 141.4,396.7 157.7,395.5 173,394.5 185,393.6 189.5,394 197.7,397.3 206,399.6 214,401.8 221.4,402.9 244,402.8 247.7,400.5 253.2,398.2 261,391 269,378.2 276.8,367.3 285,358.2 293.2,351.8 301.4,341 309.5,332.7 317.7,327.3 326,321.8 334,316.4 342.3,311.8 350,306.9 357,303 366,297.9 381.8,290.5 397.7,283 405.2,280.5 411.5,274.5 419,266 429.5,257.6 437,251.8 445.5,251.2 454,250.2 461.4,246.5 468.8,242.7 477.5,238.9" fill="none" stroke="#00ffff" stroke-width="2.2" stroke-linejoin="round" stroke-linecap="round" />
<g shape-rendering="crispEdges">
<rect x="13" y="379" width="1" height="47" fill="#00ff00" />
<rect x="11" y="420" width="2" height="1" fill="#00ff00" />
<rect x="14" y="381" width="2" height="1" fill="#00ff00" />
<rect x="21" y="344" width="1" height="44" fill="#00ff00" />
<rect x="19" y="385" width="2" height="1" fill="#00ff00" />
<rect x="22" y="368" width="2" height="1" fill="#00ff00" />
<rect x="29" y="332" width="1" height="143" fill="#ff0000" />
<rect x="27" y="372" width="2" height="1" fill="#ff0000" />
<rect x="30" y="440" width="2" height="1" fill="#ff0000" />
<rect x="37" y="403" width="1" height="38" fill="#00ff00" />
<rect x="35" y="437" width="2" height="1" fill="#00ff00" />
<rect x="38" y="424" width="2" height="1" fill="#00ff00" />
<rect x="45" y="421" width="1" height="33" fill="#ff0000" />
<rect x="43" y="429" width="2" height="1" fill="#ff0000" />
<rect x="46" y="444" width="2" height="1" fill="#ff0000" />
<rect x="53" y="419" width="1" height="27" fill="#00ff00" />
<rect x="51" y="442" width="2" height="1" fill="#00ff00" />
<rect x="54" y="433" width="2" height="1" fill="#00ff00" />
<rect x="61" y="369" width="1" height="74" fill="#00ff00" />
<rect x="59" y="435" width="2" height="1" fill="#00ff00" />
<rect x="62" y="372" width="2" height="1" fill="#00ff00" />
<rect x="69" y="360" width="1" height="25" fill="#ff0000" />
<rect x="67" y="374" width="2" height="1" fill="#ff0000" />
<rect x="70" y="376" width="2" height="1" fill="#ff0000" />
<rect x="77" y="334" width="1" height="46" fill="#00ff00" />
<rect x="75" y="374" width="2" height="1" fill="#00ff00" />
<rect x="78" y="339" width="2" height="1" fill="#00ff00" />
<rect x="85" y="332" width="1" height="60" fill="#ff0000" />
<rect x="83" y="338" width="2" height="1" fill="#ff0000" />
<rect x="86" y="381" width="2" height="1" fill="#ff0000" />
<rect x="93" y="369" width="1" height="26" fill="#ff0000" />
<rect x="91" y="384" width="2" height="1" fill="#ff0000" />
<rect x="94" y="392" width="2" height="1" fill="#ff0000" />
<rect x="101" y="381" width="1" height="17" fill="#00ff00" />
<rect x="99" y="395" width="2" height="1" fill="#00ff00" />
<rect x="102" y="389" width="2" height="1" fill="#00ff00" />
<rect x="109" y="374" width="1" height="18" fill="#00ff00" />
<rect x="107" y="388" width="2" height="1" fill="#00ff00" />
<rect x="110" y="376" width="2" height="1" fill="#00ff00" />
<rect x="117" y="374" width="1" height="16" fill="#ff0000" />
<rect x="115" y="374" width="2" height="1" fill="#ff0000" />
<rect x="118" y="389" width="2" height="1" fill="#ff0000" />
<rect x="125" y="376" width="1" height="20" fill="#00ff00" />
<rect x="123" y="388" width="2" height="1" fill="#00ff00" />
<rect x="126" y="384" width="2" height="1" fill="#00ff00" />
<rect x="133" y="379" width="1" height="13" fill="#ff0000" />
<rect x="131" y="384" width="2" height="1" fill="#ff0000" />
<rect x="134" y="389" width="2" height="1" fill="#ff0000" />
<rect x="141" y="386" width="1" height="19" fill="#ff0000" />
<rect x="139" y="389" width="2" height="1" fill="#ff0000" />
<rect x="142" y="392" width="2" height="1" fill="#ff0000" />
<rect x="149" y="389" width="1" height="15" fill="#00ff00" />
<rect x="147" y="396" width="2" height="1" fill="#00ff00" />
<rect x="150" y="393" width="2" height="1" fill="#00ff00" />
<rect x="157" y="384" width="1" height="14" fill="#00ff00" />
<rect x="155" y="393" width="2" height="1" fill="#00ff00" />
<rect x="158" y="388" width="2" height="1" fill="#00ff00" />
<rect x="165" y="379" width="1" height="17" fill="#ff0000" />
<rect x="163" y="388" width="2" height="1" fill="#ff0000" />
<rect x="166" y="392" width="2" height="1" fill="#ff0000" />
<rect x="173" y="384" width="1" height="15" fill="#00ff00" />
<rect x="171" y="392" width="2" height="1" fill="#00ff00" />
<rect x="174" y="389" width="2" height="1" fill="#00ff00" />
<rect x="181" y="379" width="1" height="13" fill="#a000f0" />
<rect x="179" y="388" width="2" height="1" fill="#a000f0" />
<rect x="182" y="388" width="2" height="1" fill="#a000f0" />
<rect x="189" y="381" width="1" height="12" fill="#ff0000" />
<rect x="187" y="386" width="2" height="1" fill="#ff0000" />
<rect x="190" y="391" width="2" height="1" fill="#ff0000" />
<rect x="197" y="384" width="1" height="51" fill="#ff0000" />
<rect x="195" y="390" width="2" height="1" fill="#ff0000" />
<rect x="198" y="426" width="2" height="1" fill="#ff0000" />
<rect x="205" y="408" width="1" height="27" fill="#00ff00" />
<rect x="203" y="430" width="2" height="1" fill="#00ff00" />
<rect x="206" y="427" width="2" height="1" fill="#00ff00" />
<rect x="213" y="408" width="1" height="27" fill="#a000f0" />
<rect x="211" y="424" width="2" height="1" fill="#a000f0" />
<rect x="214" y="424" width="2" height="1" fill="#a000f0" />
<rect x="221" y="397" width="1" height="38" fill="#a000f0" />
<rect x="219" y="421" width="2" height="1" fill="#a000f0" />
<rect x="222" y="421" width="2" height="1" fill="#a000f0" />
<rect x="229" y="387" width="1" height="48" fill="#00ff00" />
<rect x="227" y="424" width="2" height="1" fill="#00ff00" />
<rect x="230" y="410" width="2" height="1" fill="#00ff00" />
<rect x="237" y="387" width="1" height="41" fill="#00ff00" />
<rect x="235" y="408" width="2" height="1" fill="#00ff00" />
<rect x="238" y="401" width="2" height="1" fill="#00ff00" />
<rect x="245" y="366" width="1" height="53" fill="#00ff00" />
<rect x="243" y="400" width="2" height="1" fill="#00ff00" />
<rect x="246" y="392" width="2" height="1" fill="#00ff00" />
<rect x="253" y="326" width="1" height="78" fill="#00ff00" />
<rect x="251" y="389" width="2" height="1" fill="#00ff00" />
<rect x="254" y="329" width="2" height="1" fill="#00ff00" />
<rect x="261" y="273" width="1" height="55" fill="#00ff00" />
<rect x="259" y="326" width="2" height="1" fill="#00ff00" />
<rect x="262" y="310" width="2" height="1" fill="#00ff00" />
<rect x="269" y="228" width="1" height="102" fill="#00ff00" />
<rect x="267" y="308" width="2" height="1" fill="#00ff00" />
<rect x="270" y="232" width="2" height="1" fill="#00ff00" />
<rect x="277" y="189" width="1" height="59" fill="#ff0000" />
<rect x="275" y="234" width="2" height="1" fill="#ff0000" />
<rect x="278" y="239" width="2" height="1" fill="#ff0000" />
<rect x="285" y="236" width="1" height="30" fill="#ff0000" />
<rect x="283" y="241" width="2" height="1" fill="#ff0000" />
<rect x="286" y="264" width="2" height="1" fill="#ff0000" />
<rect x="293" y="249" width="1" height="23" fill="#ff0000" />
<rect x="291" y="260" width="2" height="1" fill="#ff0000" />
<rect x="294" y="266" width="2" height="1" fill="#ff0000" />
<rect x="301" y="220" width="1" height="73" fill="#00ff00" />
<rect x="299" y="268" width="2" height="1" fill="#00ff00" />
<rect x="302" y="228" width="2" height="1" fill="#00ff00" />
<rect x="309" y="223" width="1" height="35" fill="#ff0000" />
<rect x="307" y="227" width="2" height="1" fill="#ff0000" />
<rect x="310" y="236" width="2" height="1" fill="#ff0000" />
<rect x="317" y="234" width="1" height="38" fill="#ff0000" />
<rect x="315" y="235" width="2" height="1" fill="#ff0000" />
<rect x="318" y="266" width="2" height="1" fill="#ff0000" />
<rect x="325" y="257" width="1" height="11" fill="#00ff00" />
<rect x="323" y="264" width="2" height="1" fill="#00ff00" />
<rect x="326" y="258" width="2" height="1" fill="#00ff00" />
<rect x="333" y="247" width="1" height="14" fill="#00ff00" />
<rect x="331" y="260" width="2" height="1" fill="#00ff00" />
<rect x="334" y="258" width="2" height="1" fill="#00ff00" />
<rect x="341" y="249" width="1" height="9" fill="#ff0000" />
<rect x="339" y="255" width="2" height="1" fill="#ff0000" />
<rect x="342" y="257" width="2" height="1" fill="#ff0000" />
<rect x="349" y="249" width="1" height="17" fill="#a000f0" />
<rect x="347" y="256" width="2" height="1" fill="#a000f0" />
<rect x="350" y="256" width="2" height="1" fill="#a000f0" />
<rect x="357" y="239" width="1" height="16" fill="#a000f0" />
<rect x="355" y="252" width="2" height="1" fill="#a000f0" />
<rect x="358" y="252" width="2" height="1" fill="#a000f0" />
<rect x="365" y="242" width="1" height="11" fill="#00ff00" />
<rect x="363" y="250" width="2" height="1" fill="#00ff00" />
<rect x="366" y="243" width="2" height="1" fill="#00ff00" />
<rect x="373" y="239" width="1" height="11" fill="#ff0000" />
<rect x="371" y="244" width="2" height="1" fill="#ff0000" />
<rect x="374" y="249" width="2" height="1" fill="#ff0000" />
<rect x="381" y="244" width="1" height="12" fill="#00ff00" />
<rect x="379" y="253" width="2" height="1" fill="#00ff00" />
<rect x="382" y="250" width="2" height="1" fill="#00ff00" />
<rect x="389" y="242" width="1" height="11" fill="#ff0000" />
<rect x="387" y="248" width="2" height="1" fill="#ff0000" />
<rect x="390" y="252" width="2" height="1" fill="#ff0000" />
<rect x="397" y="212" width="1" height="38" fill="#00ff00" />
<rect x="395" y="249" width="2" height="1" fill="#00ff00" />
<rect x="398" y="234" width="2" height="1" fill="#00ff00" />
<rect x="405" y="227" width="1" height="26" fill="#ff0000" />
<rect x="403" y="233" width="2" height="1" fill="#ff0000" />
<rect x="406" y="242" width="2" height="1" fill="#ff0000" />
<rect x="413" y="134" width="1" height="114" fill="#00ff00" />
<rect x="411" y="245" width="2" height="1" fill="#00ff00" />
<rect x="414" y="198" width="2" height="1" fill="#00ff00" />
<rect x="421" y="160" width="1" height="38" fill="#00ff00" />
<rect x="419" y="194" width="2" height="1" fill="#00ff00" />
<rect x="422" y="169" width="2" height="1" fill="#00ff00" />
<rect x="429" y="157" width="1" height="30" fill="#ff0000" />
<rect x="427" y="170" width="2" height="1" fill="#ff0000" />
<rect x="430" y="184" width="2" height="1" fill="#ff0000" />
<rect x="437" y="173" width="1" height="43" fill="#ff0000" />
<rect x="435" y="185" width="2" height="1" fill="#ff0000" />
<rect x="438" y="190" width="2" height="1" fill="#ff0000" />
<rect x="445" y="178" width="1" height="65" fill="#ff0000" />
<rect x="443" y="185" width="2" height="1" fill="#ff0000" />
<rect x="446" y="228" width="2" height="1" fill="#ff0000" />
<rect x="453" y="218" width="1" height="38" fill="#ff0000" />
<rect x="451" y="226" width="2" height="1" fill="#ff0000" />
<rect x="454" y="242" width="2" height="1" fill="#ff0000" />
<rect x="461" y="204" width="1" height="43" fill="#00ff00" />
<rect x="459" y="245" width="2" height="1" fill="#00ff00" />
<rect x="462" y="207" width="2" height="1" fill="#00ff00" />
<rect x="469" y="190" width="1" height="29" fill="#00ff00" />
<rect x="467" y="206" width="2" height="1" fill="#00ff00" />
<rect x="470" y="192" width="2" height="1" fill="#00ff00" />
<rect x="477" y="191" width="1" height="9" fill="#a000f0" />
<rect x="475" y="194" width="2" height="1" fill="#a000f0" />
<rect x="478" y="194" width="2" height="1" fill="#a000f0" />
</g>
<g transform="translate(29.4,321) rotate(0)"><path d="M0,-4.75 L-6.1,4.75 L0,1.55 Z" fill="#84817e" stroke="#84817e" stroke-width="0.4" stroke-linejoin="round"/><path d="M0,-4.75 L6.1,4.75 L0,1.55 Z" fill="#161616" stroke="#72726e" stroke-width="0.8" stroke-linejoin="round"/></g>
<g transform="translate(85.4,321.1) rotate(0)"><path d="M0,-4.75 L-6.1,4.75 L0,1.55 Z" fill="#84817e" stroke="#84817e" stroke-width="0.4" stroke-linejoin="round"/><path d="M0,-4.75 L6.1,4.75 L0,1.55 Z" fill="#161616" stroke="#72726e" stroke-width="0.8" stroke-linejoin="round"/></g>
<g transform="translate(29,482.4) rotate(180)"><path d="M0,-4.75 L-6.1,4.75 L0,1.55 Z" fill="#84817e" stroke="#84817e" stroke-width="0.4" stroke-linejoin="round"/><path d="M0,-4.75 L6.1,4.75 L0,1.55 Z" fill="#161616" stroke="#72726e" stroke-width="0.8" stroke-linejoin="round"/></g>
<g transform="translate(101,405) rotate(180)"><path d="M0,-4.75 L-6.1,4.75 L0,1.55 Z" fill="#84817e" stroke="#84817e" stroke-width="0.4" stroke-linejoin="round"/><path d="M0,-4.75 L6.1,4.75 L0,1.55 Z" fill="#161616" stroke="#72726e" stroke-width="0.8" stroke-linejoin="round"/></g>
<g transform="translate(181.2,369.5) rotate(0)"><path d="M0,-4.75 L-6.1,4.75 L0,1.55 Z" fill="#84817e" stroke="#84817e" stroke-width="0.4" stroke-linejoin="round"/><path d="M0,-4.75 L6.1,4.75 L0,1.55 Z" fill="#161616" stroke="#72726e" stroke-width="0.8" stroke-linejoin="round"/></g>
<g transform="translate(149,411.3) rotate(180)"><path d="M0,-4.75 L-6.1,4.75 L0,1.55 Z" fill="#84817e" stroke="#84817e" stroke-width="0.4" stroke-linejoin="round"/><path d="M0,-4.75 L6.1,4.75 L0,1.55 Z" fill="#161616" stroke="#72726e" stroke-width="0.8" stroke-linejoin="round"/></g>
<g transform="translate(229,441.5) rotate(180)"><path d="M0,-4.75 L-6.1,4.75 L0,1.55 Z" fill="#84817e" stroke="#84817e" stroke-width="0.4" stroke-linejoin="round"/><path d="M0,-4.75 L6.1,4.75 L0,1.55 Z" fill="#161616" stroke="#72726e" stroke-width="0.8" stroke-linejoin="round"/></g>
<g transform="translate(277,179.8) rotate(0)"><path d="M0,-4.75 L-6.1,4.75 L0,1.55 Z" fill="#84817e" stroke="#84817e" stroke-width="0.4" stroke-linejoin="round"/><path d="M0,-4.75 L6.1,4.75 L0,1.55 Z" fill="#161616" stroke="#72726e" stroke-width="0.8" stroke-linejoin="round"/></g>
<g transform="translate(301.2,210.7) rotate(0)"><path d="M0,-4.75 L-6.1,4.75 L0,1.55 Z" fill="#84817e" stroke="#84817e" stroke-width="0.4" stroke-linejoin="round"/><path d="M0,-4.75 L6.1,4.75 L0,1.55 Z" fill="#161616" stroke="#72726e" stroke-width="0.8" stroke-linejoin="round"/></g>
<g transform="translate(301.2,300.6) rotate(180)"><path d="M0,-4.75 L-6.1,4.75 L0,1.55 Z" fill="#84817e" stroke="#84817e" stroke-width="0.4" stroke-linejoin="round"/><path d="M0,-4.75 L6.1,4.75 L0,1.55 Z" fill="#161616" stroke="#72726e" stroke-width="0.8" stroke-linejoin="round"/></g>
<g transform="translate(349.3,272.6) rotate(180)"><path d="M0,-4.75 L-6.1,4.75 L0,1.55 Z" fill="#84817e" stroke="#84817e" stroke-width="0.4" stroke-linejoin="round"/><path d="M0,-4.75 L6.1,4.75 L0,1.55 Z" fill="#161616" stroke="#72726e" stroke-width="0.8" stroke-linejoin="round"/></g>
<g transform="translate(373.5,229) rotate(0)"><path d="M0,-4.75 L-6.1,4.75 L0,1.55 Z" fill="#84817e" stroke="#84817e" stroke-width="0.4" stroke-linejoin="round"/><path d="M0,-4.75 L6.1,4.75 L0,1.55 Z" fill="#161616" stroke="#72726e" stroke-width="0.8" stroke-linejoin="round"/></g>
<g transform="translate(381.1,263.8) rotate(180)"><path d="M0,-4.75 L-6.1,4.75 L0,1.55 Z" fill="#84817e" stroke="#84817e" stroke-width="0.4" stroke-linejoin="round"/><path d="M0,-4.75 L6.1,4.75 L0,1.55 Z" fill="#161616" stroke="#72726e" stroke-width="0.8" stroke-linejoin="round"/></g>
<g transform="translate(413.4,123.5) rotate(0)"><path d="M0,-4.75 L-6.1,4.75 L0,1.55 Z" fill="#84817e" stroke="#84817e" stroke-width="0.4" stroke-linejoin="round"/><path d="M0,-4.75 L6.1,4.75 L0,1.55 Z" fill="#161616" stroke="#72726e" stroke-width="0.8" stroke-linejoin="round"/></g>
<g transform="translate(453.3,263.8) rotate(180)"><path d="M0,-4.75 L-6.1,4.75 L0,1.55 Z" fill="#84817e" stroke="#84817e" stroke-width="0.4" stroke-linejoin="round"/><path d="M0,-4.75 L6.1,4.75 L0,1.55 Z" fill="#161616" stroke="#72726e" stroke-width="0.8" stroke-linejoin="round"/></g>
<circle cx="28.9" cy="315.8" r="6.2" fill="#ff00ff"/>
<circle cx="61" cy="464.2" r="6.2" fill="#00ffff"/>
<circle cx="141" cy="380" r="6.2" fill="#ff00ff"/>
<circle cx="236.9" cy="438.9" r="6.2" fill="#00ffff"/>
<circle cx="405" cy="219" r="6.2" fill="#ff00ff"/>
<circle cx="421" cy="210.3" r="6.2" fill="#00ffff"/>
<circle cx="444.8" cy="159.2" r="6.2" fill="#ff00ff"/>
</g>
<g shape-rendering="crispEdges">
<rect x="13" y="677.5" width="3" height="13.0" fill="#8000ff" />
<rect x="19" y="663.5" width="5" height="27.0" fill="#8000ff" />
<rect x="27" y="675.0" width="5" height="15.0" fill="#ff0000" />
<rect x="35" y="681.5" width="5" height="9.0" fill="#ff0000" />
<rect x="43" y="690.5" width="5" height="1.5" fill="#ff0000" />
<rect x="51" y="690.5" width="5" height="6.0" fill="#ff0000" />
<rect x="59" y="679.5" width="5" height="11.0" fill="#8000ff" />
<rect x="67" y="668.0" width="5" height="22.5" fill="#8000ff" />
<rect x="75" y="648.0" width="5" height="42.5" fill="#8000ff" />
<rect x="83" y="646.0" width="5" height="44.0" fill="#8000ff" />
<rect x="91" y="648.0" width="5" height="42.5" fill="#ff0000" />
<rect x="99" y="650.0" width="5" height="40.5" fill="#ff0000" />
<rect x="107" y="647.0" width="5" height="43.5" fill="#8000ff" />
<rect x="115" y="650.0" width="5" height="40.5" fill="#ff0000" />
<rect x="123" y="650.0" width="5" height="40.0" fill="#ff0000" />
<rect x="131" y="652.5" width="5" height="38.0" fill="#ff0000" />
<rect x="139" y="656.0" width="5" height="34.5" fill="#ff0000" />
<rect x="147" y="659.0" width="5" height="31.5" fill="#ff0000" />
<rect x="155" y="661.5" width="5" height="29.0" fill="#ff0000" />
<rect x="163" y="664.5" width="5" height="26.0" fill="#ff0000" />
<rect x="171" y="666.0" width="5" height="24.5" fill="#ff0000" />
<rect x="179" y="666.0" width="5" height="24.5" fill="#ff0000" />
<rect x="187" y="669.5" width="5" height="21.0" fill="#ff0000" />
<rect x="195" y="682.0" width="5" height="8.5" fill="#ff0000" />
<rect x="203" y="690.5" width="5" height="3.5" fill="#ff0000" />
<rect x="211" y="690.5" width="5" height="10.5" fill="#ff0000" />
<rect x="219" y="690.5" width="5" height="15.5" fill="#ff0000" />
<rect x="227" y="690.5" width="5" height="15.5" fill="#ff0000" />
<rect x="235" y="690.5" width="5" height="13.5" fill="#8000ff" />
<rect x="243" y="690.5" width="5" height="7.5" fill="#8000ff" />
<rect x="251" y="672.0" width="5" height="18.5" fill="#8000ff" />
<rect x="259" y="647.5" width="5" height="43.0" fill="#8000ff" />
<rect x="267" y="603.5" width="5" height="87.0" fill="#8000ff" />
<rect x="275" y="572.0" width="5" height="118.5" fill="#8000ff" />
<rect x="283" y="556.0" width="5" height="134.5" fill="#8000ff" />
<rect x="291" y="546.5" width="5" height="144.0" fill="#8000ff" />
<rect x="299" y="528.0" width="5" height="162.5" fill="#8000ff" />
<rect x="307" y="519.0" width="5" height="171.5" fill="#8000ff" />
<rect x="315" y="523.5" width="5" height="167.0" fill="#ff0000" />
<rect x="323" y="525.0" width="5" height="165.0" fill="#ff0000" />
<rect x="331" y="528.0" width="5" height="162.5" fill="#ff0000" />
<rect x="339" y="533.0" width="5" height="157.5" fill="#ff0000" />
<rect x="347" y="538.0" width="5" height="152.5" fill="#ff0000" />
<rect x="355" y="542.0" width="5" height="148.5" fill="#ff0000" />
<rect x="363" y="544.5" width="5" height="146.0" fill="#ff0000" />
<rect x="371" y="550.0" width="5" height="140.5" fill="#ff0000" />
<rect x="379" y="556.0" width="5" height="134.5" fill="#ff0000" />
<rect x="387" y="563.0" width="5" height="127.5" fill="#ff0000" />
<rect x="395" y="564.0" width="5" height="126.5" fill="#ff0000" />
<rect x="403" y="569.0" width="5" height="121.5" fill="#ff0000" />
<rect x="411" y="560.0" width="5" height="130.5" fill="#8000ff" />
<rect x="419" y="545.0" width="5" height="145.5" fill="#8000ff" />
<rect x="427" y="540.0" width="5" height="150.5" fill="#8000ff" />
<rect x="435" y="539.0" width="5" height="151.5" fill="#8000ff" />
<rect x="443" y="553.0" width="5" height="137.5" fill="#ff0000" />
<rect x="451" y="570.0" width="5" height="120.5" fill="#ff0000" />
<rect x="459" y="573.0" width="5" height="117.5" fill="#ff0000" />
<rect x="467" y="572.5" width="5" height="118.0" fill="#8000ff" />
<rect x="475" y="574.5" width="5" height="116.0" fill="#ff0000" />
</g>
<polyline points="13.5,690 21,687 29.5,684.4 37.4,683.6 45.5,683.6 53.4,683.6 61.5,681.3 69.4,679.4 77.5,675.2 85.4,672.4 93.3,670.4 101,668 109.5,664 117,659.7 125,655.5 133,652 141,650.2 149,651 157,653 165,654.7 173,656 181,658 189,660.9 197,665 205,669.3 213,673.5 221,678.6 229,683.4 237,687.6 245,691 253,691.8 261,689 269,680.6 277,665 285,649.7 293,632.8 301,613 309,593.5 317,575.2 325,558.4 333,545.7 341,535.9 349,532.5 357,531 365,531.7 373,535 381,538.7 389,541.5 397,546.6 405,551.3 413,554.7 421,555.6 429,555 437,554.7 445,554.7 453,556.4 461,557.8 469,558.4 477,558.4" fill="none" stroke="#32cd32" stroke-width="1" stroke-linejoin="round" stroke-linecap="round" stroke-dasharray="9 3 3 3 3 3"/>
<g shape-rendering="crispEdges" fill="none" stroke="#fff" stroke-width="1">
<path d="M12.5,505.5 V108.5 H610.5 V505.5 Z"/>
<path d="M12.5,715.5 V508.5 H610.5 V715.5 Z"/>
</g>
<g shape-rendering="crispEdges">
<rect x="611" y="136" width="3" height="1" fill="#fff" />
<text x="616" y="139.3" font-size="10" fill="#fff" textLength="27.5" lengthAdjust="spacingAndGlyphs" >1.6920</text>
<rect x="611" y="176" width="3" height="1" fill="#fff" />
<text x="616" y="179.3" font-size="10" fill="#fff" textLength="27.5" lengthAdjust="spacingAndGlyphs" >1.6905</text>
<rect x="611" y="215" width="3" height="1" fill="#fff" />
<text x="616" y="218.3" font-size="10" fill="#fff" textLength="27.5" lengthAdjust="spacingAndGlyphs" >1.6890</text>
<rect x="611" y="294" width="3" height="1" fill="#fff" />
<text x="616" y="297.3" font-size="10" fill="#fff" textLength="27.5" lengthAdjust="spacingAndGlyphs" >1.6860</text>
<rect x="611" y="334" width="3" height="1" fill="#fff" />
<text x="616" y="337.3" font-size="10" fill="#fff" textLength="27.5" lengthAdjust="spacingAndGlyphs" >1.6845</text>
<rect x="611" y="374" width="3" height="1" fill="#fff" />
<text x="616" y="377.3" font-size="10" fill="#fff" textLength="27.5" lengthAdjust="spacingAndGlyphs" >1.6830</text>
<rect x="611" y="413" width="3" height="1" fill="#fff" />
<text x="616" y="416.3" font-size="10" fill="#fff" textLength="27.5" lengthAdjust="spacingAndGlyphs" >1.6815</text>
<rect x="611" y="453" width="3" height="1" fill="#fff" />
<text x="616" y="456.3" font-size="10" fill="#fff" textLength="27.5" lengthAdjust="spacingAndGlyphs" >1.6800</text>
<rect x="611" y="492" width="3" height="1" fill="#fff" />
<text x="616" y="495.3" font-size="10" fill="#fff" textLength="27.5" lengthAdjust="spacingAndGlyphs" >1.6785</text>
<rect x="612" y="188.7" width="36" height="10.5" fill="#fff" />
<text x="616" y="197" font-size="10" fill="#000" textLength="27.5" lengthAdjust="spacingAndGlyphs" >1.6898</text>
<rect x="612" y="247.3" width="36" height="11" fill="#00e5ee" />
<text x="616" y="256.2" font-size="10" fill="#000" textLength="27.5" lengthAdjust="spacingAndGlyphs" >1.6876</text>
<rect x="612" y="275.3" width="36" height="11" fill="#00e5ee" />
<text x="616" y="284.2" font-size="10" fill="#000" textLength="27.5" lengthAdjust="spacingAndGlyphs" >1.6865</text>
<rect x="611" y="194" width="2" height="1" fill="#fff" />
<text x="614.3" y="519" font-size="10" fill="#fff" textLength="32.4" lengthAdjust="spacingAndGlyphs" >0.00171</text>
<text x="614.5" y="693" font-size="10" fill="#fff" textLength="18.5" lengthAdjust="spacingAndGlyphs" >0.00</text>
<text x="614.2" y="712" font-size="10" fill="#fff" textLength="36" lengthAdjust="spacingAndGlyphs" >-0.00023</text>
<rect x="611" y="690" width="3" height="1" fill="#fff" />
</g>
<path d="M484.8,109 H494 L489.4,114 Z" fill="#3d4852"/>
<path d="M16.3,114.8 H23 L19.65,118.6 Z" fill="#fff"/>
<text x="28.7" y="120" font-size="10" fill="#fff" textLength="52.6" lengthAdjust="spacingAndGlyphs" >GBPUSD,H1</text>
<text x="89" y="120" font-size="10" fill="#fff" textLength="26.7" lengthAdjust="spacingAndGlyphs" >1.6898</text>
<text x="119" y="120" font-size="10" fill="#fff" textLength="27.3" lengthAdjust="spacingAndGlyphs" >1.6899</text>
<text x="150.7" y="120" font-size="10" fill="#fff" textLength="26.6" lengthAdjust="spacingAndGlyphs" >1.6896</text>
<text x="181.3" y="120" font-size="10" fill="#fff" textLength="27.4" lengthAdjust="spacingAndGlyphs" >1.6898</text>
<text x="17.2" y="520.6" font-size="10" fill="#fff" textLength="65.8" lengthAdjust="spacingAndGlyphs" >MACD(12,26,9)</text>
<text x="86.3" y="520.6" font-size="10" fill="#fff" textLength="32.1" lengthAdjust="spacingAndGlyphs" >0.00000</text>
<text x="122.2" y="520.6" font-size="10" fill="#fff" textLength="31.6" lengthAdjust="spacingAndGlyphs" >0.00110</text>
<text x="158" y="520.6" font-size="10" fill="#fff" textLength="32" lengthAdjust="spacingAndGlyphs" >0.00000</text>
<text x="194.3" y="520.6" font-size="10" fill="#fff" textLength="31.2" lengthAdjust="spacingAndGlyphs" >0.00124</text>
<text x="230" y="520.6" font-size="10" fill="#fff" textLength="32.2" lengthAdjust="spacingAndGlyphs" >0.00000</text>
<g shape-rendering="crispEdges">
<rect x="13" y="716" width="1" height="3" fill="#fff" />
<text x="12.5" y="728" font-size="10" fill="#fff" textLength="50.4" lengthAdjust="spacingAndGlyphs" >29 Apr 2014</text>
<rect x="77" y="716" width="1" height="3" fill="#fff" />
<text x="76.5" y="728" font-size="10" fill="#fff" textLength="53.5" lengthAdjust="spacingAndGlyphs" >29 Apr 17:00</text>
<rect x="141" y="716" width="1" height="3" fill="#fff" />
<text x="140.5" y="728" font-size="10" fill="#fff" textLength="54" lengthAdjust="spacingAndGlyphs" >30 Apr 01:00</text>
<rect x="205" y="716" width="1" height="3" fill="#fff" />
<text x="204.5" y="728" font-size="10" fill="#fff" textLength="54" lengthAdjust="spacingAndGlyphs" >30 Apr 09:00</text>
<rect x="269" y="716" width="1" height="3" fill="#fff" />
<text x="268.5" y="728" font-size="10" fill="#fff" textLength="54" lengthAdjust="spacingAndGlyphs" >30 Apr 17:00</text>
<rect x="333" y="716" width="1" height="3" fill="#fff" />
<text x="332.5" y="728" font-size="10" fill="#fff" textLength="52.3" lengthAdjust="spacingAndGlyphs" >1 May 01:00</text>
<rect x="397" y="716" width="1" height="3" fill="#fff" />
<text x="396.5" y="728" font-size="10" fill="#fff" textLength="52" lengthAdjust="spacingAndGlyphs" >1 May 09:00</text>
<rect x="461" y="716" width="1" height="3" fill="#fff" />
<text x="460.5" y="728" font-size="10" fill="#fff" textLength="52" lengthAdjust="spacingAndGlyphs" >1 May 17:00</text>
</g>
<rect x="8" y="732.8" width="644" height="2.7" fill="#fff" />
<rect x="8" y="735.1" width="644" height="1.3" fill="#484848" />
<rect x="8" y="736.4" width="644" height="18" fill="#f0f0f0" />
<rect x="8.5" y="736.4" width="1" height="18" fill="#a8a8a8" />
<rect x="88" y="735.4" width="80" height="18.8" fill="#000" />
<rect x="89" y="735.2" width="78" height="17" fill="#fff" />
<rect x="8" y="754.2" width="644" height="1.6" fill="#fff" />
<text x="22.5" y="747.9" font-size="10.8" fill="#808080" textLength="54.2" lengthAdjust="spacingAndGlyphs" >EURJPY,H1</text>
<text x="100" y="747.6" font-size="10.8" fill="#000" textLength="55.1" lengthAdjust="spacingAndGlyphs" >GBPUSD,H1</text>
<path d="M627.5,741.5 v7 l-4,-3.5 Z M640.5,741.5 v7 l4,-3.5 Z" fill="#9a9a9a"/>
<rect x="8" y="755.8" width="644" height="14.2" fill="#f0f0f0" />
<text x="10.8" y="771.5" font-size="12.2" fill="#000" textLength="29" lengthAdjust="spacingAndGlyphs" >Defau</text>
<rect x="42" y="759" width="1" height="11" fill="#a8a8a8" />
<rect x="145" y="759" width="1" height="11" fill="#a8a8a8" />
<rect x="215.5" y="759" width="1" height="11" fill="#a8a8a8" />
<rect x="286" y="759" width="1" height="11" fill="#a8a8a8" />
<rect x="354.5" y="759" width="1" height="11" fill="#a8a8a8" />
<rect x="424.5" y="759" width="1" height="11" fill="#a8a8a8" />
<rect x="490" y="759" width="1" height="11" fill="#a8a8a8" />
<rect x="496.5" y="761" width="1.5" height="9" fill="#566f12" />
<rect x="498.75" y="761" width="1.5" height="9" fill="#566f12" />
<rect x="501.0" y="761" width="1.5" height="9" fill="#566f12" />
<rect x="503.25" y="761" width="1.5" height="9" fill="#566f12" />
<rect x="505.5" y="761" width="1.5" height="9" fill="#566f12" />
<rect x="507.75" y="761" width="1.5" height="9" fill="#aebf7a" />
<rect x="507.75" y="767.0" width="1.5" height="3.0" fill="#1f3a54" />
<rect x="510.0" y="761" width="1.5" height="9" fill="#aebf7a" />
<rect x="510.0" y="765.8" width="1.5" height="4.2" fill="#1f3a54" />
<rect x="512.25" y="761" width="1.5" height="9" fill="#aebf7a" />
<rect x="512.25" y="764.6" width="1.5" height="5.4" fill="#1f3a54" />
<rect x="514.5" y="761" width="1.5" height="9" fill="#aebf7a" />
<rect x="514.5" y="763.4" width="1.5" height="6.6" fill="#1f3a54" />
<rect x="516.75" y="761" width="1.5" height="9" fill="#aebf7a" />
<rect x="516.75" y="762.2" width="1.5" height="7.8" fill="#1f3a54" />
<text x="559" y="771.2" font-size="12.2" fill="#000" textLength="37.4" lengthAdjust="spacingAndGlyphs" >41/1 kb</text>
<path d="M650,762 l-8,8 M650,765.5 l-4.5,4.5" stroke="#a0a0a0" stroke-width="1"/>
<linearGradient id="tk" x1="0" y1="0" x2="0" y2="1"><stop offset="0" stop-color="#565656"/><stop offset="0.25" stop-color="#383838"/><stop offset="1" stop-color="#1c1c1c"/></linearGradient>
<linearGradient id="tk1" x1="0" y1="0" x2="0" y2="1"><stop offset="0" stop-color="#8a8a8a"/><stop offset="0.2" stop-color="#6c6c6c"/><stop offset="1" stop-color="#585858"/></linearGradient>
<linearGradient id="tk2" x1="0" y1="0" x2="0" y2="1"><stop offset="0" stop-color="#d8d8d8"/><stop offset="0.2" stop-color="#a8a8a8"/><stop offset="1" stop-color="#8a8a8a"/></linearGradient>
<rect x="0" y="770" width="660" height="14" fill="url(#tk)" />
<rect x="0" y="770" width="660" height="0.6" fill="#2a2a2a" />
<rect x="0" y="770.6" width="660" height="0.8" fill="#777" />
<path d="M-2,785 V773.5 q0,-2.500 2.500,-2.500 H58 q2.500,0 2.500,2.500 V785 Z" fill="url(#tk1)" stroke="#2c2c2c" stroke-width="1"/>
<path d="M65,785 V773.5 q0,-2.500 2.500,-2.500 H220 q2.500,0 2.500,2.500 V785 Z" fill="url(#tk2)" stroke="#2c2c2c" stroke-width="1"/>
<rect x="74.5" y="776.5" width="15" height="10" rx="1.5" fill="#2a6aa0" stroke="#d8e8f8" stroke-width="1.4"/>
<text x="1" y="789" font-size="12.2" fill="#fff" >нение</text>
<text x="95" y="789.5" font-size="12.2" fill="#fff" textLength="114" lengthAdjust="spacingAndGlyphs" >3014953: MetaTrader</text>
<text x="477.5" y="786" font-size="12.2" fill="#fff" textLength="12" lengthAdjust="spacingAndGlyphs" >EN</text>
<path d="M500,784 v-2.500 l3.500,-3.500 h7 l-2.500,3.500 h-8 M508,781.500 v2.500" fill="none" stroke="#ddd" stroke-width="1.100"/>
<rect x="546.5" y="777.5" width="7" height="6.5" fill="#ddd" />
<text x="595.3" y="790.4" font-size="12.2" fill="#fff" textLength="26.5" lengthAdjust="spacingAndGlyphs" >10:07</text>
<rect x="646.5" y="770.5" width="1" height="14" fill="#888" />
<rect x="647.5" y="770.5" width="11" height="14" fill="url(#tk1)" />
<rect x="647.5" y="771.5" width="11" height="13" fill="#000" opacity="0.25"/>
</svg>
</body></html>
